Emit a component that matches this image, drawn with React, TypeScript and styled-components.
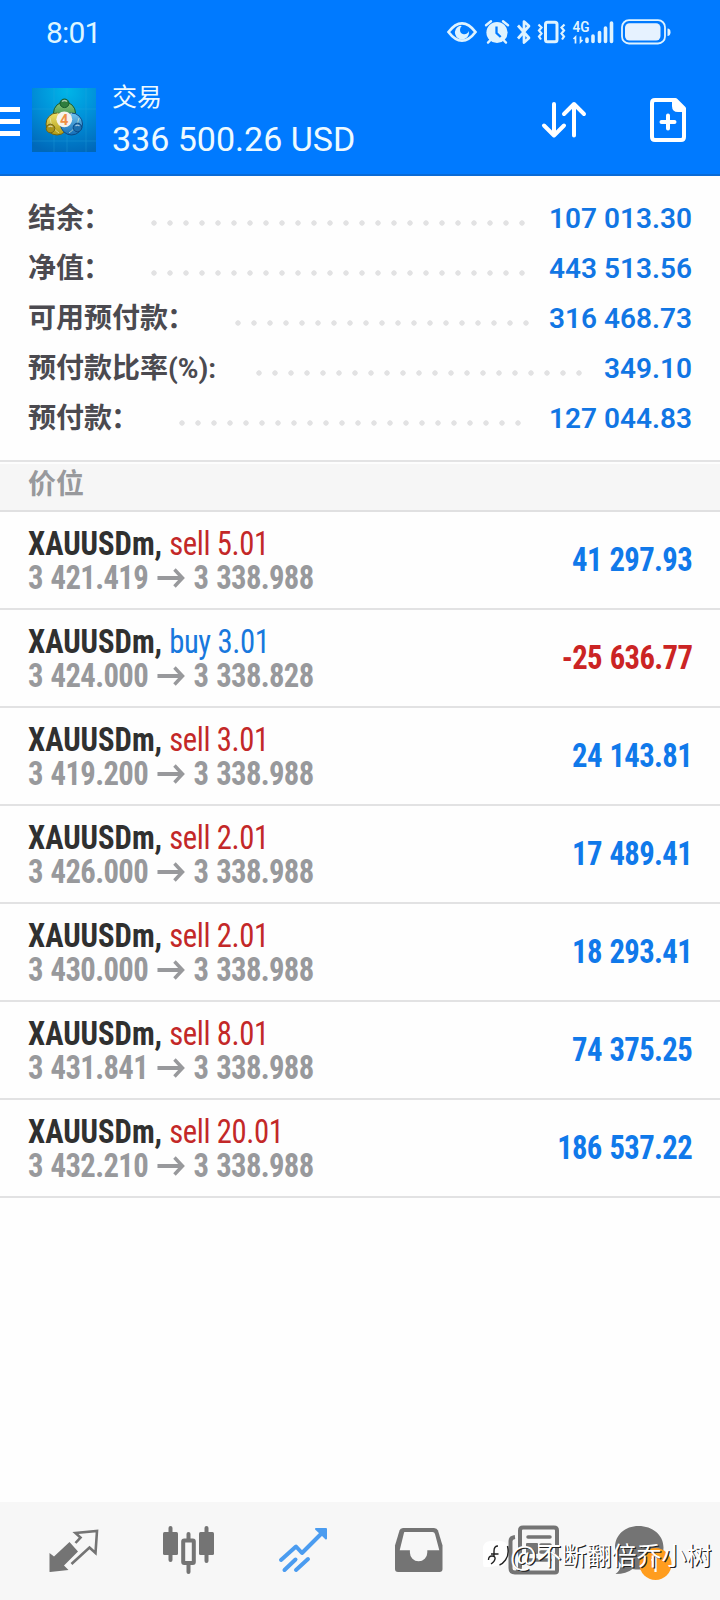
import React from "react";
import styled, { createGlobalStyle } from "styled-components";

const CJK = `Roboto, "Noto Sans CJK SC", sans-serif`;
const CONDENSED = `"Roboto Condensed", Roboto, "Noto Sans CJK SC", sans-serif`;

const GlobalStyle = createGlobalStyle`
  * { box-sizing: border-box; }
  body { margin: 0; background: #fff; font-family: ${CJK}; }
`;

const Screen = styled.div`
  position: relative;
  display: flex;
  flex-direction: column;
  width: 720px;
  height: 1600px;
  overflow: hidden;
  background: #fefefe;
`;

const Header = styled.header`
  height: 176px;
  background: #007aff;
  border-bottom: 2px solid #0a6bd6;
  color: #eefaff;
`;

const StatusBar = styled.div`
  display: flex;
  justify-content: space-between;
  height: 64px;
  padding-left: 46px;
`;

const Clock = styled.span`
  padding-top: 15px;
  font-size: 30px;
  line-height: 36px;
  letter-spacing: -0.8px;
  font-weight: 450;
  color: #def6ff;
`;

const StatusIcons = styled.svg`
  width: 290px;
  height: 64px;
`;

const AppBar = styled.div`
  display: flex;
  height: 110px;
`;

const MenuIcon = styled.div`
  display: flex;
  flex-direction: column;
  gap: 7px;
  width: 20px;
  margin: 43px 12px 0 0;
`;

const MenuLine = styled.span`
  height: 5px;
  background: #fff;
`;

const Logo = styled.svg`
  width: 64px;
  height: 64px;
  margin-top: 24px;
`;

const TitleBlock = styled.div`
  flex: 1;
  padding: 17px 0 0 16px;
`;

const Title = styled.div`
  font-size: 25px;
  line-height: 34px;
`;

const Total = styled.div`
  font-size: 34px;
  line-height: 40px;
  padding-top: 4px;
  white-space: nowrap;
`;

const HeaderActions = styled.svg`
  width: 290px;
  height: 110px;
`;

const Summary = styled.section`
  height: 284px;
  padding: 18px 28px 0;
`;

const SummaryRow = styled.div`
  display: flex;
  align-items: center;
  height: 50px;
`;

const SummaryLabel = styled.span<{ $width: number }>`
  flex: none;
  width: ${(p) => p.$width}px;
  font-size: 28px;
  line-height: 50px;
  font-weight: 700;
  color: #4b4a50;
  white-space: nowrap;
`;

const Colon = styled.span`
  margin-left: -1px;
`;

const Dots = styled.span<{ $count: number }>`
  width: ${(p) => p.$count * 16}px;
  height: 6px;
  margin-top: 8px;
  background: radial-gradient(circle at 3px 3px, #e2e2e3 2.4px, transparent 3px) 0 0 / 16px 6px repeat-x;
`;

const SummaryValue = styled.span`
  margin-left: auto;
  font-size: 28px;
  line-height: 50px;
  font-weight: 650;
  color: #1176e4;
  white-space: nowrap;
`;

const SectionTitle = styled.h2`
  height: 52px;
  margin: 0;
  padding-left: 28px;
  border-top: 2px solid #e3e3e4;
  border-bottom: 2px solid #e0e0e1;
  background: #f6f6f6;
  box-shadow: inset 0 2px 0 #fdfdfd;
  font-size: 28px;
  line-height: 45px;
  font-weight: 700;
  color: #98999c;
`;

const Position = styled.div`
  display: flex;
  justify-content: space-between;
  align-items: center;
  height: 98px;
  padding: 0 28px;
  border-bottom: 2px solid #e2e2e3;
  font-family: ${CONDENSED};
  font-stretch: 75%;
  font-size: 33px;
  white-space: nowrap;
`;

const Deal = styled.div`
  padding-top: 1px;
  line-height: 34px;
  transform: scaleX(0.93);
  transform-origin: left;
`;

const Symbol = styled.span`
  font-weight: 700;
  letter-spacing: -0.05px;
  color: #303030;
`;

const Side = styled.span<{ $buy: boolean }>`
  letter-spacing: -0.4px;
  color: ${(p) => (p.$buy ? "#1878dd" : "#c32828")};
`;

const Prices = styled.div`
  display: flex;
  align-items: center;
  font-weight: 700;
  letter-spacing: -0.7px;
  word-spacing: 1.4px;
  color: #98999c;
`;

const Arrow = styled.svg`
  width: 30px;
  height: 20px;
  margin: 0 9px 0 10px;
`;

const Profit = styled.span<{ $loss: boolean }>`
  padding-bottom: 1px;
  font-weight: 700;
  letter-spacing: -0.7px;
  word-spacing: 1.4px;
  transform: scaleX(0.93);
  transform-origin: right;
  color: ${(p) => (p.$loss ? "#cb2424" : "#1079ea")};
`;

const TabBar = styled.nav`
  display: flex;
  height: 98px;
  margin-top: auto;
  padding-left: 16px;
  background: #f7f7f7;
`;

const Tab = styled.div`
  display: flex;
  flex: none;
  justify-content: center;
  align-items: center;
  width: 115px;
`;

const TabIcon = styled.svg`
  width: 71px;
  height: 62px;
`;

const Watermark = styled.div`
  position: absolute;
  left: 482px;
  top: 1535px;
  display: flex;
  align-items: center;
  height: 38px;
  font: 400 25px/38px "Noto Sans CJK SC", sans-serif;
  color: #fff;
  text-shadow: 1.2px 1.2px 0.4px #222;
  white-space: nowrap;
`;

const WatermarkAt = styled.span`
  font-size: 28px;
`;

const WatermarkLogo = styled.svg`
  width: 28px;
  height: 32px;
`;

const summary = [
  { label: "结余", colon: "：", value: "107 013.30", width: 122.5, dots: 24 },
  { label: "净值", colon: "：", value: "443 513.56", width: 122.5, dots: 24 },
  { label: "可用预付款", colon: "：", value: "316 468.73", width: 206.5, dots: 19 },
  { label: "预付款比率(%):", colon: "", value: "349.10", width: 227.5, dots: 21 },
  { label: "预付款", colon: "：", value: "127 044.83", width: 150.5, dots: 22 },
];

const positions = [
  { side: "sell", lots: "5.01", open: "3 421.419", now: "3 338.988", profit: "41 297.93" },
  { side: "buy", lots: "3.01", open: "3 424.000", now: "3 338.828", profit: "-25 636.77" },
  { side: "sell", lots: "3.01", open: "3 419.200", now: "3 338.988", profit: "24 143.81" },
  { side: "sell", lots: "2.01", open: "3 426.000", now: "3 338.988", profit: "17 489.41" },
  { side: "sell", lots: "2.01", open: "3 430.000", now: "3 338.988", profit: "18 293.41" },
  { side: "sell", lots: "8.01", open: "3 431.841", now: "3 338.988", profit: "74 375.25" },
  { side: "sell", lots: "20.01", open: "3 432.210", now: "3 338.988", profit: "186 537.22" },
];

const GRAY = "#747474";

const StatusGlyphs = () => (
  <StatusIcons viewBox="430 0 290 64" fill="none" stroke="#dff3ff">
    <path d="M448.500 32Q455 23.300 462 23.300T475.500 32Q469 40.700 462 40.700T448.500 32Z" strokeWidth="2.700" />
    <path d="M460 25.800a7 7 0 1 0 8.800 5.200q-1.600 3.600-5.100 3.200t-3.700-4.200q0-2.400 1.700-4z" fill="#dff3ff" stroke="none" />
    <circle cx="497" cy="32.500" r="10.600" fill="#dff3ff" stroke="none" />
    <path d="M496.500 26.500V33l4.200 4" stroke="#007aff" strokeWidth="2.300" />
    <path d="M486 25.300l5-4M508 25.300l-5-4M490.500 40l-2.500 2.600M503.500 40l2.500 2.600" strokeWidth="2.400" strokeLinecap="round" />
    <path d="M518 25.500l11 12.500-5 4.500V21.500l5 4.500-11 12.500" strokeWidth="2.700" strokeLinejoin="round" />
    <rect x="545.500" y="22.200" width="11.500" height="19.600" rx="2" strokeWidth="3" />
    <path d="M538.500 24.500l3 3-2.500 3 2.500 3-2.500 3 2 3M564.500 24.500l-3 3 2.500 3-2.500 3 2.500 3-2 3" strokeWidth="2.200" />
    <text x="572.500" y="32" fill="#dff3ff" stroke="none" fontSize="14.500" fontWeight="600" textLength="17" lengthAdjust="spacingAndGlyphs" fontFamily="Roboto, sans-serif">4G</text>
    <path d="M573.500 39l2-2v6.500M580.500 36.500V42l2-2" strokeWidth="1.700" />
    <path d="M587 39v2.500M593 36v5.500M599.500 32.500v9M605.500 28v13.500M611.500 23v18.500" strokeWidth="3.600" strokeLinecap="round" />
    <rect x="622" y="20.200" width="43" height="23.300" rx="7" strokeWidth="1.800" />
    <rect x="625" y="23.300" width="35.500" height="17.200" rx="4.500" fill="#e6f2ff" stroke="none" />
    <path d="M667.500 28.500q3 0 3 3.700t-3 3.700z" fill="#dff3ff" stroke="none" />
  </StatusIcons>
);

const BrandLogo = () => (
  <Logo viewBox="32 88 64 64">
    <defs>
      <radialGradient id="sky" cx=".55" cy=".05" r="1">
        <stop offset="0" stopColor="#00b5e8" />
        <stop offset=".5" stopColor="#008fd8" />
        <stop offset="1" stopColor="#0068b9" />
      </radialGradient>
      <linearGradient id="green" x2="0" y2="1"><stop stopColor="#8cc67c" /><stop offset="1" stopColor="#1f7d39" /></linearGradient>
      <linearGradient id="gold" x2="0" y2="1"><stop stopColor="#ece06a" /><stop offset="1" stopColor="#b09a14" /></linearGradient>
      <linearGradient id="azure" x2="0" y2="1"><stop stopColor="#72c4ee" /><stop offset="1" stopColor="#126cb6" /></linearGradient>
    </defs>
    <path fill="url(#sky)" d="M32 88h64v64H32z" />
    <path d="M54 88v64M67 88v64M86 88v64M32 109h64M32 141h64" stroke="#2eaee0" strokeWidth=".7" opacity=".4" />
    <g strokeWidth="1">
      <circle cx="64.500" cy="113" r="11" fill="url(#green)" stroke="#14592d" />
      <circle cx="57" cy="124" r="11" fill="url(#gold)" stroke="#6f6318" />
      <circle cx="71.500" cy="124" r="11" fill="url(#azure)" stroke="#0b4a86" />
      <path d="M57 113q7 6 15 0M50 118q1 10 9 15M79 118q-2 10-10 15" fill="none" stroke="#e9f2c4" opacity=".6" />
      <ellipse cx="64.500" cy="103.300" rx="4.500" ry="4.300" fill="#2f7d3d" stroke="#14592d" />
      <circle cx="50.500" cy="128.500" r="4.300" fill="#a8931c" stroke="#6f6318" />
      <circle cx="77.500" cy="127.500" r="4.300" fill="#1d6fae" stroke="#0b4a86" />
    </g>
    <path d="M62 101.500q2.500-2 5 0M48.500 127q2-1.600 4 0M75.500 126q2-1.600 4 0" fill="none" stroke="#fff" strokeWidth="1.300" opacity=".6" />
    <circle cx="64.300" cy="119.300" r="7.900" fill="#f5f2ec" />
    <text x="64.200" y="124.600" textAnchor="middle" fontFamily="Roboto, sans-serif" fontWeight="700" fontSize="14.500" fill="#ef8f43">4</text>
  </Logo>
);

const ActionGlyphs = () => (
  <HeaderActions viewBox="430 64 290 110" fill="none" stroke="#fff" strokeWidth="4" strokeLinecap="round" strokeLinejoin="round">
    <path d="M554 104v31M544 125.500l10 10 10-10M574 135.500V104M564 114l10-10 10 10" />
    <path d="M655 100h20.500l8.500 8.500V137q0 3-3 3h-26q-3 0-3-3v-34q0-3 3-3z" />
    <path d="M672 100h4l9 9v3h-7q-6 0-6-6z" fill="#fff" stroke="none" />
    <path d="M661.500 122h13M668 115.500v13" />
  </HeaderActions>
);

const icons = [
  <>
    <path d="M49.500 1553v18.500q0 .5.500.5l18.500-2-4.500-4.500 14-14-8.500-9.500-15.500 14.500z" fill={GRAY} />
    <path d="M75.500 1543l5-5.500-5-4.500 21.500-2-1.500 22-6-5.500-18 16.500" fill="none" stroke={GRAY} strokeWidth="2.600" />
  </>,
  <>
    <path d="M170.500 1528v32M188.500 1534v38M206.500 1528v33" stroke={GRAY} strokeWidth="4" strokeLinecap="round" />
    <rect x="163" y="1532" width="15" height="23" rx="1.500" fill={GRAY} />
    <rect x="199" y="1532" width="15" height="23" rx="1.500" fill={GRAY} />
    <rect x="183.200" y="1540.500" width="10.600" height="22.500" rx="1" fill="#f7f7f7" stroke={GRAY} strokeWidth="4" />
  </>,
  <g stroke="#4b9cf0" strokeWidth="4" fill="none" strokeLinecap="round" strokeLinejoin="round">
    <path d="M281 1560l15-13.500 6 6.500 20-20M284.500 1570l11-10.500M296 1570l12-11" />
    <path d="M316 1529h10v9.500l-4-4z" fill="#4b9cf0" strokeWidth="2" />
  </g>,
  <>
    <path d="M403 1528h31q3 0 4 2.500l4.500 15v23.500q0 3-3 3H398q-3 0-3-3v-23.500l4.500-15q.8-2.500 3.500-2.500z" fill={GRAY} />
    <path d="M404.500 1532h28q2 0 2.500 2l4.300 16.300h-12v2.200a8.700 8.700 0 0 1-17.400 0v-2.200h-10.200l4-16.300q.3-2 .8-2z" fill="#f7f7f7" />
  </>,
  <>
    <path d="M515 1537q-4.500.5-4.500 4v27q0 4.500 4.500 4.500h40q2 0 2-2v-40q0-3-3-3h-31q-3 0-3 3v36q0 5-4 5.500" fill="none" stroke={GRAY} strokeWidth="4" />
    <path d="M528 1537h22M541 1545h9M541 1552h9M528 1560h22" stroke={GRAY} strokeWidth="3.500" strokeLinecap="round" />
    <rect x="526" y="1543" width="12" height="11" rx="1" fill={GRAY} />
  </>,
  <>
    <path d="M638.500 1526c14 0 25 9 25 21.500s-11 22-25 22q-3 0-6-.6-6 5-17 5.100 5-3.500 5.500-9.500-6-6-6-17c0-12.500 10-21.500 23.500-21.500z" fill={GRAY} />
    <circle cx="655.500" cy="1564" r="16" fill="#ff9d1e" />
    <path d="M651.500 1560.500l4-2.500v14" stroke="#fff" strokeWidth="2.200" fill="none" />
  </>,
];

export default function App() {
  return (
    <Screen>
      <GlobalStyle />
      <Header>
        <StatusBar>
          <Clock>8:01</Clock>
          <StatusGlyphs />
        </StatusBar>
        <AppBar>
          <MenuIcon>
            <MenuLine />
            <MenuLine />
            <MenuLine />
          </MenuIcon>
          <BrandLogo />
          <TitleBlock>
            <Title>交易</Title>
            <Total>336 500.26 USD</Total>
          </TitleBlock>
          <ActionGlyphs />
        </AppBar>
      </Header>
      <Summary>
        {summary.map((s) => (
          <SummaryRow key={s.label}>
            <SummaryLabel $width={s.width}>
              {s.label}
              {s.colon && <Colon>{s.colon}</Colon>}
            </SummaryLabel>
            <Dots $count={s.dots} />
            <SummaryValue>{s.value}</SummaryValue>
          </SummaryRow>
        ))}
      </Summary>
      <SectionTitle>价位</SectionTitle>
      {positions.map((p) => (
        <Position key={p.open}>
          <Deal>
            <div>
              <Symbol>XAUUSDm,</Symbol> <Side $buy={p.side === "buy"}>{p.side} {p.lots}</Side>
            </div>
            <Prices>
              {p.open}
              <Arrow viewBox="0 0 30 20" fill="none" stroke="#98999c" strokeWidth="3.800">
                <path d="M0 10h27M18.500 1.500l8.500 8.500-8.500 8.500" />
              </Arrow>
              {p.now}
            </Prices>
          </Deal>
          <Profit $loss={p.profit.startsWith("-")}>{p.profit}</Profit>
        </Position>
      ))}
      <TabBar>
        {icons.map((icon, i) => (
          <Tab key={i}>
            <TabIcon viewBox={`${38 + 115 * i} 1520 71 62`}>{icon}</TabIcon>
          </Tab>
        ))}
      </TabBar>
      <Watermark>
        <WatermarkLogo viewBox="482 1540 28 32">
          <path d="M484 1569q-1-1-1-4v-14q0-8 8-8h9q8 0 8 8v8q0 6-5 9-2 1-3-1-6 2-16 2z" fill="#fff" />
          <path d="M488.500 1562q0-4 3.500-4t3 3-4 5M494 1558v-5q0-5 4-5M491 1556h7.500M507.500 1548q2 9-2 14-3 4-6 5" fill="none" stroke="#222" strokeWidth="1.400" />
        </WatermarkLogo>
        <WatermarkAt>@</WatermarkAt>不断翻倍乔小树
      </Watermark>
    </Screen>
  );
}
